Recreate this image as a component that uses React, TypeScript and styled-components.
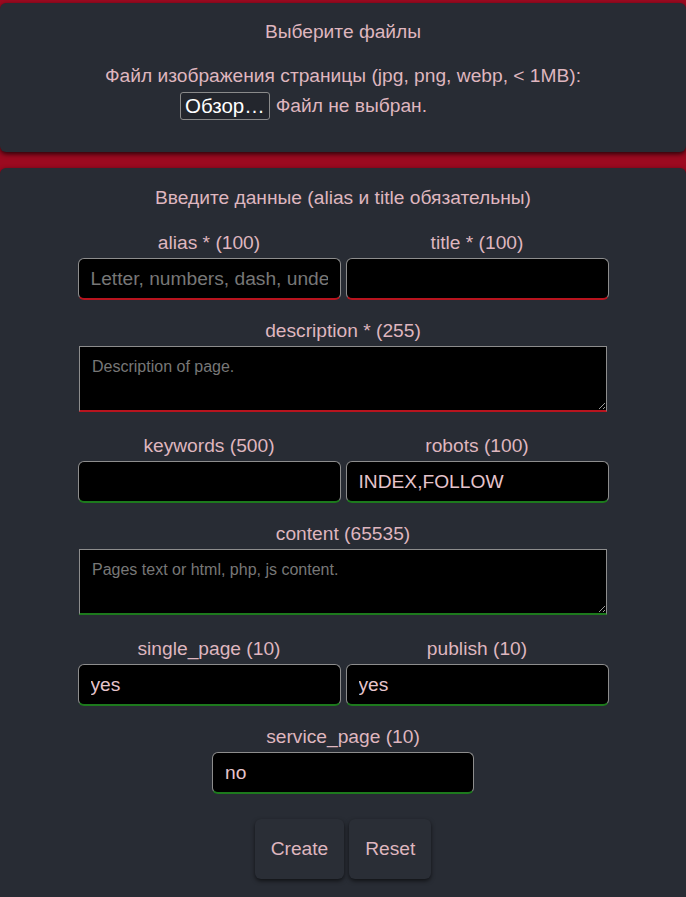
import React from "react";
import styled, { createGlobalStyle } from "styled-components";

const Global = createGlobalStyle`
  html, body { margin: 0; padding: 0; }
  body {
    background: #9c0a20;
    font-family: "Liberation Sans", Arial, sans-serif;
    color: #dfb6bf;
  }
`;

const Page = styled.div`
  display: flex;
  flex-direction: column;
  gap: 16px;
  padding-top: 3px;
`;

const Panel = styled.section`
  background: #282c34;
  border-radius: 6px;
  box-shadow: 0 2px 5px rgba(0, 0, 0, 0.75);
  display: flex;
  flex-direction: column;
  align-items: center;
`;

const TopPanel = styled(Panel)`
  height: 149px;
  box-sizing: border-box;
  padding-top: 18px;
`;

const FormPanel = styled(Panel)`
  padding: 19px 0 40px;
  border-radius: 6px 6px 0 0;
`;

const Heading = styled.div`
  font-size: 19.2px;
  line-height: 22px;
  text-align: center;
`;

const FileBlock = styled.div`
  margin-top: 22px;
  font-size: 19.2px;
  line-height: 22px;
  text-align: center;
  display: flex;
  flex-direction: column;
  align-items: center;
  gap: 5px;
`;

const FileRow = styled.div`
  width: 326px;
  display: flex;
  justify-content: flex-start;
  align-items: center;
  gap: 6px;
  font-size: 19.2px;
`;

const BrowseButton = styled.button`
  font-family: "Liberation Sans", Arial, sans-serif;
  font-size: 20.5px;
  color: #ffffff;
  background: #23262d;
  border: 1px solid #8a8a8a;
  border-radius: 3px;
  height: 28px;
  padding: 0 4px;
  line-height: 24px;
`;

const FileState = styled.span`
  color: #dfb6bf;
`;

const Form = styled.form`
  margin-top: 23px;
  display: flex;
  flex-direction: column;
  align-items: center;
  gap: 20px;
`;

const Row = styled.div`
  display: grid;
  grid-template-columns: 263px 263px;
  gap: 5px;
`;

const Field = styled.label`
  display: flex;
  flex-direction: column;
  align-items: center;
  gap: 4px;
`;

const Wide = styled(Field)`
  width: 528px;
  padding-bottom: 3px;
`;

const Single = styled(Field)`
  width: 262px;
`;

const LabelText = styled.span`
  font-size: 19.2px;
  line-height: 22px;
  color: #dfb6bf;
`;

const Input = styled.input<{ $required?: boolean }>`
  box-sizing: border-box;
  width: 100%;
  height: 42px;
  background: #000;
  border: 1px solid #8d8d8d;
  border-bottom: 2px solid ${(p) => (p.$required ? "#b8141e" : "#1d7a1d")};
  border-radius: 6px;
  padding: 0 12px;
  font-family: "Liberation Sans", Arial, sans-serif;
  font-size: 19.2px;
  color: #e6c4cc;
  outline: none;
  &::placeholder { color: #777; }
`;

const TextArea = styled.textarea<{ $required?: boolean }>`
  display: block;
  box-sizing: border-box;
  width: 100%;
  height: 66px;
  background: #000;
  border: 1px solid #8d8d8d;
  border-bottom: 2px solid ${(p) => (p.$required ? "#b8141e" : "#1d7a1d")};
  border-radius: 0;
  padding: 11px 12px;
  font-family: "Liberation Sans", Arial, sans-serif;
  font-size: 16px;
  color: #e6c4cc;
  outline: none;
  &::placeholder { color: #777; }
`;

const Actions = styled.div`
  display: flex;
  gap: 5px;
  margin-top: 5px;
`;

const ActionButton = styled.button`
  font-family: "Liberation Sans", Arial, sans-serif;
  font-size: 19.2px;
  color: #dfb6bf;
  background: #2a2e36;
  border: none;
  border-radius: 6px;
  height: 60px;
  padding: 0 16px;
  box-shadow: 0 2px 4px rgba(0, 0, 0, 0.6);
`;

export default function App() {
  return (
    <>
      <Global />
      <Page>
        <TopPanel>
          <Heading>Выберите файлы</Heading>
          <FileBlock>
            <span>Файл изображения страницы (jpg, png, webp, &lt; 1MB):</span>
            <FileRow>
              <BrowseButton type="button">Обзор…</BrowseButton>
              <FileState>Файл не выбран.</FileState>
            </FileRow>
          </FileBlock>
        </TopPanel>
        <FormPanel>
          <Heading>Введите данные (alias и title обязательны)</Heading>
          <Form onSubmit={(e) => e.preventDefault()}>
            <Row>
              <Field>
                <LabelText>alias * (100)</LabelText>
                <Input $required placeholder="Letter, numbers, dash, underscore" />
              </Field>
              <Field>
                <LabelText>title * (100)</LabelText>
                <Input $required />
              </Field>
            </Row>
            <Wide>
              <LabelText>description * (255)</LabelText>
              <TextArea $required placeholder="Description of page." />
            </Wide>
            <Row>
              <Field>
                <LabelText>keywords (500)</LabelText>
                <Input />
              </Field>
              <Field>
                <LabelText>robots (100)</LabelText>
                <Input defaultValue="INDEX,FOLLOW" />
              </Field>
            </Row>
            <Wide>
              <LabelText>content (65535)</LabelText>
              <TextArea placeholder="Pages text or html, php, js content." />
            </Wide>
            <Row>
              <Field>
                <LabelText>single_page (10)</LabelText>
                <Input defaultValue="yes" />
              </Field>
              <Field>
                <LabelText>publish (10)</LabelText>
                <Input defaultValue="yes" />
              </Field>
            </Row>
            <Single>
              <LabelText>service_page (10)</LabelText>
              <Input defaultValue="no" />
            </Single>
            <Actions>
              <ActionButton type="submit">Create</ActionButton>
              <ActionButton type="reset">Reset</ActionButton>
            </Actions>
          </Form>
        </FormPanel>
      </Page>
    </>
  );
}
